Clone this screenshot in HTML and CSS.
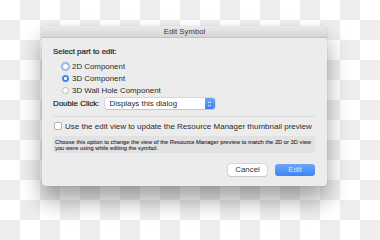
FILE: index.html
```html
<!DOCTYPE html>
<html>
<head>
<meta charset="utf-8">
<link rel="stylesheet" href="styles.css">
</head>
<body>
<div class="dialog">
  <div class="titlebar">Edit Symbol</div>
  <div class="content">
    <div class="label-bold">Select part to edit:</div>
    <div class="radios">
      <div class="radio-row"><span class="radio focus"></span><span>2D Component</span></div>
      <div class="radio-row"><span class="radio on"></span><span>3D Component</span></div>
      <div class="radio-row"><span class="radio"></span><span>3D Wall Hole Component</span></div>
    </div>
    <div class="dbl-row">
      <span class="label-bold">Double Click:</span>
      <div class="popup">
        <span class="popup-text">Displays this dialog</span>
        <span class="stepper">
          <svg width="5" height="8" viewBox="0 0 5 8"><path d="M1 3 L2.5 1.5 L4 3 M1 5 L2.5 6.5 L4 5" fill="none" stroke="#fff" stroke-width="0.9"/></svg>
        </span>
      </div>
    </div>
    <div class="sep"></div>
    <div class="check-row"><span class="checkbox"></span><span class="check-text">Use the edit view to update the Resource Manager thumbnail preview</span></div>
    <div class="info">Choose this option to change the view of the Resource Manager preview to match the 2D or 3D view<br>you were using while editing the symbol.</div>
    <div class="buttons">
      <div class="btn cancel">Cancel</div>
      <div class="btn edit">Edit</div>
    </div>
  </div>
</div>
</body>
</html>
```
FILE: styles.css
```css
html, body {
  margin: 0;
  padding: 0;
}
body {
  width: 380px;
  height: 240px;
  overflow: hidden;
  background-color: #ffffff;
  background-image:
    linear-gradient(45deg, #eeeeee 25%, transparent 25%, transparent 75%, #eeeeee 75%),
    linear-gradient(45deg, #eeeeee 25%, transparent 25%, transparent 75%, #eeeeee 75%);
  background-size: 40px 40px;
  background-position: 0 0, 20px 20px;
  padding: 26px 0 0 42px;
  box-sizing: border-box;
  font-family: "Liberation Sans", Arial, sans-serif;
  color: #2a2a2a;
}
.dialog {
  width: 285px;
  height: 160px;
  background: #ececec;
  border-radius: 3px;
  box-shadow: 0 14px 22px rgba(0,0,0,0.36), 0 0 1px rgba(0,0,0,0.35);
  display: flex;
  flex-direction: column;
  overflow: hidden;
}
.titlebar {
  height: 12px;
  background: linear-gradient(#ebebeb, #d5d5d5);
  border-bottom: 1px solid #c2c2c2;
  font-size: 7.8px;
  line-height: 12px;
  text-align: center;
  color: #3a3a3a;
  box-sizing: border-box;
}
.content {
  display: flex;
  flex-direction: column;
  padding: 9px 12px 0 11px;
  font-size: 7.9px;
}
.label-bold {
  color: #222;
  -webkit-text-stroke: 0.2px #222;
  line-height: 10px;
}
.radios {
  display: flex;
  flex-direction: column;
  margin-top: 3px;
  padding-left: 9px;
}
.radio-row {
  display: flex;
  align-items: center;
  gap: 3px;
  height: 12px;
}
.radio {
  width: 7px;
  height: 7px;
  border-radius: 50%;
  background: #fff;
  border: 0.5px solid #b8b8b8;
  box-sizing: border-box;
  flex: none;
}
.radio.focus {
  border: 1px solid #8fb4ef;
  box-shadow: 0 0 0 1.2px rgba(120,160,235,0.6);
}
.radio.on {
  background: radial-gradient(circle, #fff 0 1.3px, #3f86f4 1.6px);
  border: none;
}
.dbl-row {
  display: flex;
  align-items: center;
  margin-top: 1px;
  height: 13px;
  gap: 5px;
}
.popup {
  width: 110px;
  height: 11px;
  background: #fff;
  border-radius: 3px;
  box-shadow: 0 0 0 0.5px #c4c4c4, 0 0.5px 1px rgba(0,0,0,0.15);
  display: flex;
  align-items: center;
  overflow: hidden;
}
.popup-text {
  flex: 1;
  padding-left: 5px;
  line-height: 11px;
}
.stepper {
  width: 10px;
  height: 11px;
  background: linear-gradient(#6aa6f8, #3b82f4);
  display: flex;
  align-items: center;
  justify-content: center;
}
.sep {
  height: 1px;
  background: #d8d8d8;
  margin-top: 6px;
}
.check-row {
  display: flex;
  align-items: center;
  gap: 3px;
  height: 10px;
  margin-top: 4px;
  white-space: nowrap;
}
.check-text {
  font-size: 8px;
}
.checkbox {
  width: 8px;
  height: 8px;
  background: #fff;
  border: 0.5px solid #b5b5b5;
  border-radius: 2px;
  box-sizing: border-box;
  margin-left: 1px;
  flex: none;
}
.info {
  margin-top: 5px;
  background: #e2e2e2;
  border-radius: 2px;
  padding: 2.5px 2px;
  font-size: 5.75px;
  line-height: 6px;
  color: #2e2e2e;
  -webkit-text-stroke: 0.1px #2e2e2e;
  height: 17px;
  box-sizing: border-box;
}
.buttons {
  display: flex;
  justify-content: flex-end;
  gap: 8px;
  margin-top: 11px;
}
.btn {
  width: 39px;
  height: 12px;
  border-radius: 3px;
  line-height: 12px;
  text-align: center;
  font-size: 7.9px;
  box-sizing: border-box;
}
.cancel {
  background: #fff;
  box-shadow: 0 0 0 0.5px #c6c6c6, 0 0.5px 1px rgba(0,0,0,0.15);
  color: #333;
}
.edit {
  width: 40px;
  background: linear-gradient(#6ca7f8, #3d84f5);
  color: #d8e6fe;
}
```
